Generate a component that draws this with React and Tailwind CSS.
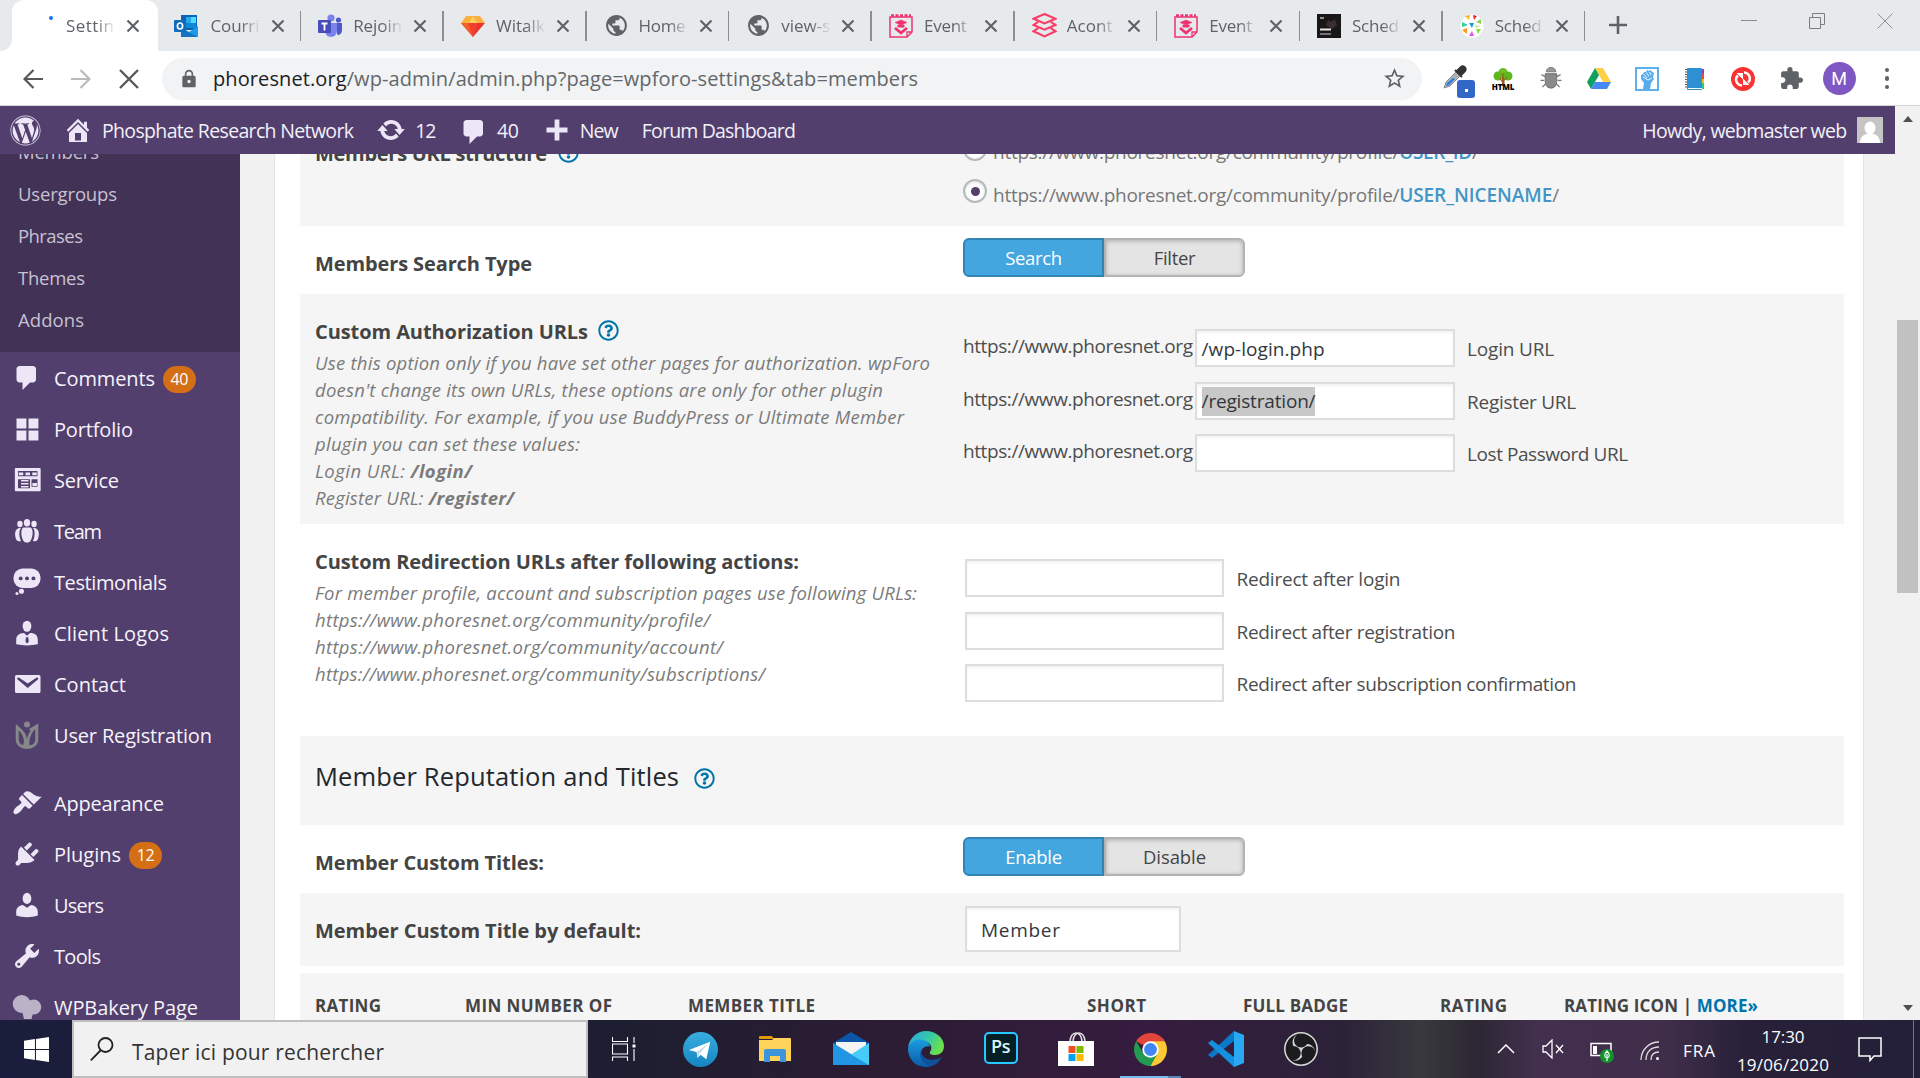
import React, { useLayoutEffect, useRef, useState } from "react";
import { FaRegQuestionCircle, FaWordpress, FaFistRaised } from "react-icons/fa";
import { MdPublic, MdExtension, MdStarBorder, MdLock } from "react-icons/md";
import { SiObsstudio } from "react-icons/si";

/* One line of text whose tracking is adjusted so that it is w pixels wide. */
function Fit({ w, children, className = "" }) {
  const ref = useRef(null);
  const [gap, setGap] = useState(0);
  useLayoutEffect(() => {
    const el = ref.current;
    const measure = () => {
      el.style.letterSpacing = "0px";
      const n = el.textContent.length;
      const g = (w - el.getBoundingClientRect().width) / Math.max(1, n - 1);
      el.style.letterSpacing = `${g}px`;
      setGap(g);
    };
    measure();
    document.fonts?.ready.then(measure);
  }, [w]);
  return (
    <span ref={ref} className={"inline-block whitespace-pre " + className} style={{ letterSpacing: `${gap}px` }}>
      {children}
    </span>
  );
}

/* ---------- browser tab icons ---------- */
const Outlook = () => (
  <svg viewBox="0 0 24 22" className="h-[22px] w-6">
    <rect x="7" y="0" width="16" height="15" fill="#0a64b5" />
    <rect x="12" y="2" width="5" height="6" fill="#28a8ea" /><rect x="17" y="2" width="5" height="6" fill="#50d9ff" />
    <rect x="12" y="8" width="10" height="5" fill="#0f88d8" />
    <path d="M7 13l8 4 9-6v10a1 1 0 0 1-1 1H7z" fill="#1d9be8" />
    <path d="M7 13l17 9H7z" fill="#1474c4" />
    <rect x="0" y="5" width="12" height="12" rx="1" fill="#0f6cbd" />
    <ellipse cx="6" cy="11" rx="2.6" ry="3" fill="none" stroke="#fff" strokeWidth="1.7" />
  </svg>
);
const Teams = () => (
  <svg viewBox="0 0 24 24" className="size-6">
    <circle cx="20.5" cy="6" r="2.6" fill="#5059c9" /><circle cx="13" cy="4" r="3.6" fill="#7b83eb" />
    <path d="M17 9h7v7c0 3-2 5-4.500 5z" fill="#5059c9" />
    <path d="M7 9h12v8a6 6 0 0 1-12 0z" fill="#7b83eb" />
    <rect x="0" y="6" width="13" height="13" rx="1" fill="#464eb8" />
    <path d="M3.500 9.500h6M6.500 9.500v7" stroke="#fff" strokeWidth="1.800" />
  </svg>
);
const Diamond = () => (
  <svg viewBox="0 0 24 22" className="h-[22px] w-6">
    <path d="M5 1h14l5 7H0z" fill="#fbb040" /><path d="M8 8l4-7 4 7z" fill="#fdd05a" />
    <path d="M0 8h24L12 22z" fill="#e8332e" /><path d="M7 8h10l-5 14z" fill="#f2402e" /><path d="M0 8h7l5 14z" fill="#f2602a" />
  </svg>
);
const Globe = () => <MdPublic className="size-[25px] text-[#5f6368]" />;
const Event = () => (
  <svg viewBox="0 0 24 24" className="size-6" fill="none" stroke="#f0326e">
    <path d="M1 3h22v15l-5 5H1z" strokeWidth="1.500" /><path d="M2 1.500h20" strokeWidth="2.500" strokeDasharray="3 1.500" />
    <path d="M18 23v-5h5" strokeWidth="1.300" />
    <path d="M12 6l6 2.500-6 2.500-6-2.500z" fill="#f0326e" strokeWidth=".5" /><path d="M9 11h6v2H9z" fill="#f0326e" />
    <path d="M6 14l6 5 6-5" strokeWidth="2.800" />
  </svg>
);
const Stack = () => (
  <svg viewBox="0 0 24 24" className="size-[25px]" fill="none" stroke="#fb3b64" strokeWidth="2">
    <path d="M12 1l10.500 4.500L12 10 1.500 5.500z" />
    <path d="M6 8.500l-4.500 3L12 16l10.500-4.500-4.500-3M6 14.500l-4.500 3L12 22.500l10.500-5-4.500-3" />
  </svg>
);
const Photo = () => (
  <svg viewBox="0 0 24 24" className="size-6">
    <rect width="24" height="24" fill="#191718" /><path d="M11 6l3 2 4-3 2 6-5 4-6-4z" fill="#3a3030" />
    <path d="M3 4h4" stroke="#d6d6d6" strokeWidth="1.300" /><path d="M3 15.500h11" stroke="#e6e6e6" strokeWidth="2" /><path d="M3 20h11" stroke="#a6a6a6" strokeWidth="1.300" />
  </svg>
);
const Confetti = () => (
  <svg viewBox="0 0 24 24" className="size-6">
    <circle cx="12" cy="12" r="11.500" fill="#fff" />
    <path d="M5 2l5-1-1 5z" fill="#f7b52a" /><path d="M13 1l4 1-3 4z" fill="#e3232f" /><path d="M16 8l5-3v5z" fill="#8ed04b" />
    <path d="M9 9h5l-2 5z" fill="#1e9be0" /><path d="M2 8l6 3-6 2z" fill="#2fd49a" /><path d="M7 14v6l-5-4z" fill="#f79a1e" />
    <path d="M9 22l3-5 2 5z" fill="#f04ff0" /><path d="M16 15h5l-3 5z" fill="#8ae03a" /><path d="M15 11l6 1-5 2z" fill="#c8e8a0" />
  </svg>
);
const Cross = () => (
  <svg viewBox="0 0 14 14" className="size-3.5" stroke="#5f6368" strokeWidth="2.200"><path d="M1.500 1.500l11 11M12.500 1.500l-11 11" /></svg>
);

const TABS = [
  ["Courri", Outlook, 49], ["Rejoin", Teams, 49], ["Witalk", Diamond, 49], ["Home", Globe, 47], ["view-s", Globe, 49],
  ["Event", Event, 43], ["Acont", Stack, 46], ["Event", Event, 43], ["Sched", Photo, 47], ["Sched", Confetti, 47],
];

function TabText({ w, children }) {
  return (
    <div className="w-[50px] overflow-hidden [mask-image:linear-gradient(to_right,black_60%,transparent_100%)]">
      <Fit w={w}>{children}</Fit>
    </div>
  );
}

function TabStrip() {
  return (
    <div className="flex h-[51px] bg-[#e6eaed] text-[17px] text-[#5f6368]">
      <div className="flex w-[12px] items-end bg-white"><div className="h-full w-full rounded-br-xl bg-[#e6eaed]" /></div>
      <div className="flex w-[145.500px] shrink-0 items-center rounded-t-xl bg-white pl-[37px]">
        <span className="mb-4 size-[4px] rounded-full bg-[#1a73e8]" />
        <div className="ml-[13px] w-[50px]"><TabText w={48}>Settin</TabText></div>
        <span className="ml-[10px]"><Cross /></span>
      </div>
      <div className="w-[1px] bg-white"><div className="h-full rounded-bl-xl bg-[#e6eaed]" /></div>
      {TABS.map(([label, Icon, w], i) => (
        <div key={i} className="flex w-[142.700px] shrink-0 items-center">
          <div className={i ? "ml-[17px] w-[25px]" : "ml-[15px] w-[25px]"}><Icon /></div>
          <div className={i ? "ml-[10px] w-[50px]" : "ml-[12px] w-[50px]"}><TabText w={w}>{label}</TabText></div>
          <span className="ml-[10px]"><Cross /></span>
          <span className="ml-auto h-[30px] w-[1.500px] bg-[#8b8f93]" />
        </div>
      ))}
      <svg viewBox="0 0 18 18" className="mt-4 ml-[24px] size-[18px]" stroke="#5f6368" strokeWidth="2.600"><path d="M9 0v18M0 9h18" /></svg>
      <div className="ml-auto flex items-start gap-[52px] pt-[13px] pr-[27px]">
        <svg viewBox="0 0 16 16" className="size-4" stroke="#8b8e91"><path d="M0 7.500h16" /></svg>
        <svg viewBox="0 0 16 16" className="size-4" stroke="#7b7e81" fill="none"><path d="M.5 4.500h11v11H.5zM3.500 4V.5h12v11H12" /></svg>
        <svg viewBox="0 0 16 16" className="size-4" stroke="#8b8e91"><path d="M.5 .5l15 15M15.500 .5l-15 15" /></svg>
      </div>
    </div>
  );
}

/* ---------- toolbar ---------- */
const Dropper = () => (
  <div className="relative h-8 w-8">
    <svg viewBox="0 0 24 24" className="mt-0.5 size-6">
      <path d="M1 23l2-6L14 6l4 4L7 21z" fill="#aeb3b8" stroke="#667" strokeWidth=".7" /><path d="M3 21l1-3 6-5 2 1-6 6z" fill="#2c7be0" />
      <path d="M12 5l7 7M14 6l4-4c2-2 6 1 4 4l-4 4z" fill="#333" stroke="#333" strokeWidth="2" />
    </svg>
    <span className="absolute top-[17px] left-[14px] flex size-[18px] items-center justify-center rounded-[3px] bg-[#3267c8]"><i className="mt-1 size-[3px] bg-white" /></span>
  </div>
);
const Tree = () => (
  <div className="flex w-6 flex-col items-center">
    <svg viewBox="0 0 20 18" className="h-[18px] w-5">
      <path d="M9 18V8h2.500v10z" fill="#9a5a1b" /><circle cx="10" cy="4.500" r="4.500" fill="#6cc024" /><circle cx="5" cy="8" r="4.500" fill="#5fb51d" /><circle cx="15" cy="8" r="4.500" fill="#5fb51d" />
      <path d="M10 15l-3-5M10.500 13l3-4M10 14V5" stroke="#a3591c" strokeWidth="1.200" />
    </svg>
    <span className="-mt-1 h-2 text-[8px] leading-[9px] font-black tracking-[-.2px] text-black">HTML</span>
  </div>
);
const Bug = () => (
  <svg viewBox="0 0 22 24" className="h-[23px] w-[22px]">
    <path d="M1 8l4 2M0 14h4M2 21l3-3M21 8l-4 2M22 14h-4M20 21l-3-3" stroke="#777" strokeWidth="1.300" />
    <path d="M6 5a5 4.500 0 0 1 10 0z" fill="#999" stroke="#777" /><path d="M5 7h12v8c0 5-3 7-6 7s-6-2-6-7z" fill="#8a8a8a" stroke="#6d6d6d" />
  </svg>
);
const Drive = () => (
  <svg viewBox="0 0 24 22" className="h-[22px] w-6">
    <path d="M8 0h8l8 14h-8z" fill="#ffcf48" /><path d="M8 0l4 7L4 21l-4-7z" fill="#11a05f" /><path d="M4 21l4-7h16l-4 7z" fill="#4688f4" />
  </svg>
);
const Book = () => (
  <svg viewBox="0 0 20 24" className="h-6 w-5">
    <path d="M16 2h3v5h-3z" fill="#8e44ad" /><path d="M16 7h3v5h-3z" fill="#e74c3c" /><path d="M16 12h3v5h-3z" fill="#f1c40f" /><path d="M16 16h3v6h-3z" fill="#2ecc71" />
    <rect x="2" y="1" width="15" height="22" rx="1" fill="#2f8fd3" /><path d="M3 21.500h14" stroke="#fff" /><path d="M1 2v20" stroke="#555" strokeWidth="2" strokeDasharray="1 1.500" />
  </svg>
);
const RedSync = () => (
  <svg viewBox="0 0 24 24" className="size-6">
    <circle cx="12" cy="12" r="12" fill="#fb3232" />
    <path d="M11 18.500C5 18 3.500 11.500 7 8.500M13 5.500c6 .5 7.500 7 4 10" fill="none" stroke="#fff" strokeWidth="2.500" />
    <path d="M5.500 6h6.500v6.500zM18.500 18H12v-6.500z" fill="#fff" />
  </svg>
);

function Toolbar() {
  return (
    <div className="flex h-[55px] items-center border-b border-[#d6d2da] bg-white pt-px">
      <div className="flex w-[162px] items-center gap-[28px] pl-[23px]">
        <svg viewBox="0 0 20 20" className="size-5 shrink-0" fill="none" stroke="#55585c" strokeWidth="2.200"><path d="M20 10H2M10.500 1L1.500 10l9 9" /></svg>
        <svg viewBox="0 0 20 20" className="size-5 shrink-0" fill="none" stroke="#b9bbbe" strokeWidth="2.200"><path d="M0 10h18M9.500 1l9 9-9 9" /></svg>
        <svg viewBox="0 0 20 20" className="size-5 shrink-0" stroke="#55585c" strokeWidth="2.400"><path d="M1 1l18 18M19 1L1 19" /></svg>
      </div>
      <div className="flex h-[42px] w-[1260px] items-center rounded-full bg-[#f1f3f4] pr-[15px] pl-[17px] text-[20px] text-[#63676b]">
        <MdLock className="size-5 text-[#5f6368]" />
        <Fit w={705} className="ml-[14px]"><span className="text-[#202124]">phoresnet.org</span>/wp-admin/admin.php?page=wpforo-settings&amp;tab=members</Fit>
        <MdStarBorder className="ml-auto size-[25px] text-[#5f6368]" />
      </div>
      <div className="flex w-[498px] items-center pl-[9px]">
        <div className="flex w-12 justify-center pl-2"><Dropper /></div>
        <div className="flex w-12 justify-center"><Tree /></div>
        <div className="flex w-12 justify-center"><Bug /></div>
        <div className="flex w-12 justify-center"><Drive /></div>
        <div className="flex w-12 justify-center"><span className="flex size-6 items-center justify-center border-2 border-[#5cb0ee] bg-white">
          <svg viewBox="0 0 20 20" className="size-5" fill="#56aced"><path d="M6 20l1-6-3-4V6l2-1 1-2 2 0 1-2 2 1 2-1 1 2 2 1-1 4 1 2-3 4-1 6z" /><path d="M7 5l3 4M9.500 3.500l2.500 4M12.500 3l1.500 3M6 8l5 3 4-2" stroke="#fff" strokeWidth=".9" fill="none" /></svg>
        </span></div>
        <div className="flex w-12 justify-center"><Book /></div>
        <div className="flex w-12 justify-center"><RedSync /></div>
        <div className="flex w-12 justify-center"><MdExtension className="size-[25px] text-[#5f6368]" /></div>
        <div className="flex w-12 justify-center"><span className="flex size-[33px] items-center justify-center rounded-full bg-[#7e57c2] font-[Roboto] text-[18px] text-white">M</span></div>
        <div className="flex w-12 flex-col items-center gap-1">
          <i className="size-[4.500px] rounded-full bg-[#5f6368]" /><i className="size-[4.500px] rounded-full bg-[#5f6368]" /><i className="size-[4.500px] rounded-full bg-[#5f6368]" />
        </div>
      </div>
    </div>
  );
}

/* ---------- admin icons on a 20-unit grid ---------- */
const P = ({ d, className = "size-[30px]", children }) => (
  <svg viewBox="0 0 20 20" className={className + " shrink-0"} fill="#ece6f6">{d && <path fillRule="evenodd" d={d} />}{children}</svg>
);
const COMMENT = "M5 2h9c1.100 0 2 .9 2 2v7c0 1.100-.9 2-2 2h-2l-5 5v-5H5c-1.100 0-2-.9-2-2V4c0-1.100.9-2 2-2z";
const HOME = "M16 8.500l1.530 1.530-1.060 1.060L10 4.600l-6.470 6.490-1.060-1.060L10 2.500l4 4v-2h2v4zm-6-2.460l6 5.990V18H4v-5.970zM12 17v-5H8v5h4z";
const UPDATE = "M10.200 3.280c3.530 0 6.430 2.610 6.920 6h2.080l-3.500 4-3.500-4h2.320c-.45-1.970-2.210-3.450-4.320-3.450-1.450 0-2.730.71-3.540 1.780L4.950 5.660C6.230 4.200 8.110 3.280 10.200 3.280zm-.4 13.440c-3.520 0-6.430-2.610-6.920-6H.8l3.500-4c1.170 1.330 2.330 2.670 3.500 4H5.480c.45 1.970 2.210 3.450 4.320 3.450 1.450 0 2.730-.71 3.540-1.780l1.710 1.950c-1.280 1.460-3.150 2.380-5.250 2.380z";
const BRUSH = "M14.480 11.060L7.410 3.990l1.500-1.500c.5-.56 2.300-.47 3.510.32 1.210.8 1.430 1.280 2.910 2.100 1.180.64 2.450 1.260 4.450.85zm-.71.71L6.700 4.700 4.930 6.470c-.39.39-.39 1.020 0 1.410l1.060 1.060c.39.39.39 1.030 0 1.420-.6.6-1.430 1.110-2.210 1.690-.35.26-.7.53-1.010.84C1.430 14.230.4 16.080 1.400 17.070c.99 1 2.840-.03 4.180-1.360.31-.31.58-.66.85-1.020.57-.78 1.080-1.610 1.690-2.210.39-.39 1.020-.39 1.410 0l1.060 1.060c.39.39 1.020.39 1.410 0z";
const PLUG = "M13.110 4.360L9.870 7.600 8 5.730l3.240-3.240c.35-.34 1.050-.2 1.560.32.52.51.66 1.210.31 1.550zm-8 1.770l.91-1.120 9.010 9.010-1.190.84c-.71.71-2.630 1.160-3.820 1.160H6.140L4.900 17.260c-.59.59-1.540.59-2.120 0-.59-.58-.59-1.530 0-2.120l1.240-1.240v-3.880c0-1.130.4-3.190 1.090-3.890zm7.260 3.970l3.240-3.240c.34-.35 1.040-.21 1.550.31.52.51.66 1.210.31 1.550l-3.240 3.250z";
const USER = "M10 9.250c-2.270 0-2.730-3.440-2.730-3.440C7 4.020 7.820 2 9.970 2c2.160 0 2.980 2.020 2.710 3.810 0 0-.41 3.440-2.680 3.440zm0 2.570L12.720 10c2.390 0 4.520 2.330 4.520 4.530v2.490s-3.650 1.130-7.240 1.130c-3.650 0-7.240-1.130-7.240-1.130v-2.490c0-2.250 1.940-4.480 4.470-4.480z";
const WRENCH = "M16.680 9.770c-1.340 1.340-3.300 1.670-4.950.99l-5.410 6.520c-.99.99-2.590.99-3.580 0s-.99-2.590 0-3.570l6.520-5.420c-.68-1.650-.35-3.610.99-4.950 1.280-1.280 3.120-1.620 4.720-1.060l-2.890 2.890 2.820 2.820 2.860-2.870c.53 1.580.18 3.390-1.080 4.650zM3.810 16.210c.4.39 1.040.39 1.430 0 .4-.4.4-1.040 0-1.430-.39-.4-1.030-.4-1.430 0-.39.39-.39 1.030 0 1.430z";
const MAIL = "M3 4h15a1 1 0 0 1 1 1v10a1 1 0 0 1-1 1H3a1 1 0 0 1-1-1V5a1 1 0 0 1 1-1zm7.490 8.600l6.740-5.530c.24-.2.43-.66.13-1.070-.29-.41-.82-.42-1.170-.17l-5.700 3.860L4.800 5.830c-.35-.25-.88-.24-1.170.17-.3.41-.11.87.13 1.070z";

const Grid = () => <P d="M3 3h6.600v6.600H3zM11 3h6.600v6.600H11zM3 11h6.600v6.600H3zM11 11h6.600v6.600H11z" />;
const Service = () => (
  <P d="M2.500 2h16a.6.6 0 0 1 .6.600v14.300a.6.6 0 0 1-.6.600h-16a.6.6 0 0 1-.6-.6V2.600a.6.600 0 0 1 .6-.6z">
    <path d="M4 4h13v3.500H4zM4 9.500h8v6H4zM13 9.500h4v5h-4z" fill="#523f6d" /><path d="M4.500 5h3v1.800h-3zM9 5h3v1.800H9zM13.500 5h3v1.800h-3zM6 10h5v1H6zM6 12h5v1H6zM6 14h5v1H6zM13.600 12h3v2h-3z" />
  </P>
);
const Team = () => (
  <P>
    <ellipse cx="5.300" cy="5.300" rx="1.800" ry="2.200" /><ellipse cx="14.700" cy="5.300" rx="1.800" ry="2.200" /><ellipse cx="10" cy="4.500" rx="2.100" ry="2.500" />
    <path d="M5.500 8c-4 0-4 5-2.500 8 .8.9 1.800 1 3 .6C4.500 13.500 4.600 9.500 6 8zM14.500 8c4 0 4 5 2.500 8-.8.9-1.800 1-3 .6 1.500-3.100 1.400-7.100 0-8.600zM7.500 7.700h5c2 1.300 1.500 7-.5 9.300-.8.900-3.200.9-4 0-2-2.300-2.500-8-.5-9.300z" />
  </P>
);
const Bubble = () => (
  <P>
    <rect x="1" y="1" width="18" height="13" rx="6" /><circle cx="6.300" cy="16.200" r="1.700" /><circle cx="3.300" cy="17.700" r="1" />
    <g fill="#523f6d"><circle cx="5.800" cy="7.600" r="1.300" /><circle cx="10" cy="7.600" r="1.300" /><circle cx="14.300" cy="7.600" r="1.300" /></g>
  </P>
);
const Business = () => (
  <P>
    <ellipse cx="10" cy="5.500" rx="2.900" ry="3.700" /><path d="M8 10l2 1.800 2-1.800c3.500 0 5.200 1.800 5.200 4.500V17.500c-4.500 1-9.800 1-14.400 0v-3C2.800 12 4.500 10 8 10z" /><path d="M9.300 12.800h1.500l.4 3-1.200 1.200-1-1.200z" fill="#523f6d" />
  </P>
);
const UserIcon = () => (
  <P><ellipse cx="10" cy="5.600" rx="2.900" ry="3.700" /><path d="M7.300 10L10 11.800 12.700 10c2.900.2 4.500 2.300 4.500 4.500V17c-4.500 1.500-9.900 1.500-14.400 0v-2.500c0-2.200 1.600-4.300 4.500-4.500z" /></P>
);
const Registration = () => (
  <P>
    <path d="M2.500 2.500l3.200 3C8.800 8.300 10 11 10 13c.3-2 1-3.800 2.300-5.600l-.9-1.400L17.500 2.300V13c0 3.800-3 6.200-7.500 6.200S2.500 16.800 2.500 13zM4.500 7v6c0 1.800 1 3.200 2.700 3.800C9.300 14 6.800 9 4.500 7zM15.500 6c-3 3-4.300 7-3.800 10.900 2.500-.3 3.800-1.900 3.800-3.900z" fill="#85878a" fillRule="evenodd" />
    <circle cx="10" cy="3" r="2" fill="#85878a" />
  </P>
);
const Bakery = () => <P><g fill="#bbb2c7"><circle cx="6.500" cy="8" r="6" /><circle cx="14.500" cy="10" r="5" /><path d="M6 10h9l-2 8H8z" /></g></P>;
const Icon = (d) => () => <P d={d} />;

const MENU = [
  ["Comments", Icon(COMMENT), 101, "40"], ["Portfolio", Grid, 79], ["Service", Service, 65], ["Team", Team, 48], ["Testimonials", Bubble, 113],
  ["Client Logos", Business, 115], ["Contact", Icon(MAIL), 72], ["User Registration", Registration, 158], null,
  ["Appearance", Icon(BRUSH), 110], ["Plugins", Icon(PLUG), 67, "12"], ["Users", UserIcon, 50], ["Tools", Icon(WRENCH), 47], ["WPBakery Page", Bakery, 144],
];

function AdminBar() {
  return (
    <div className="flex h-12 w-[1895px] items-center bg-[#523f6d] pl-[10px] text-[19.500px] text-[#f3f0f8]">
      <FaWordpress className="size-[31px] text-[#ece6f6]" />
      <P d={HOME} className="ml-[22px] size-[30px]" />
      <Fit w={252} className="mt-0.5 ml-[9px]">Phosphate Research Network</Fit>
      <P d={UPDATE} className="ml-[23px] size-[30px]" />
      <Fit w={21} className="mt-0.5 ml-[9px]">12</Fit>
      <P d={COMMENT} className="mt-1 ml-[24px] size-[30px]" />
      <Fit w={22} className="mt-0.5 ml-2">40</Fit>
      <P d="M8.400 3h3.200v5.400H17v3.200h-5.400V17H8.400v-5.400H3V8.400h5.400z" className="ml-[23px] size-[30px]" />
      <Fit w={39} className="mt-0.5 ml-[8px]">New</Fit>
      <Fit w={154} className="mt-0.5 ml-[24px]">Forum Dashboard</Fit>
      <Fit w={205} className="mt-0.5 ml-auto">Howdy, webmaster web</Fit>
      <svg viewBox="0 0 26 26" className="mr-[12px] ml-[10.500px] size-[26px] shrink-0 bg-[#c5c5c5]"><ellipse cx="13" cy="11" rx="5.500" ry="6.500" fill="#fff" /><path d="M3 26c0-7 5-9 7-9h6c2 0 7 2 7 9z" fill="#fff" /></svg>
    </div>
  );
}

function Sidebar() {
  return (
    <div className="h-full w-[240px] shrink-0 overflow-hidden bg-[#523f6d]">
      <div className="flex h-[198px] flex-col bg-[#413256] pl-[18px] text-[18.500px] leading-[42px] text-[#c8c1d2]">
        {[["Members", 81], ["Usergroups", 99], ["Phrases", 65], ["Themes", 67], ["Addons", 66]].map(([t, w], i) => (
          <div key={t} className={i ? "h-[42px]" : "-mt-[23px] h-[42px]"}><Fit w={w}>{t}</Fit></div>
        ))}
      </div>
      <div className="h-[2px]" />
      {MENU.map((m, i) => {
        if (!m) return <div key={i} className="h-[17px]" />;
        const [t, I, w, badge] = m;
        return (
          <div key={i} className="flex h-[51px] items-center pb-1 pl-[12px] text-[20px] text-[#f6f3fa]">
            <I />
            <Fit w={w} className="mt-0.5 ml-3">{t}</Fit>
            {badge && <span className="mt-[3px] ml-[8px] flex h-[27px] w-[33px] items-center justify-center rounded-full bg-[#d46f15] text-[16px] tracking-[-.3px] text-white">{badge}</span>}
          </div>
        );
      })}
    </div>
  );
}

/* ---------- settings table ---------- */
const Help = ({ className }) => <FaRegQuestionCircle className={"size-[21px] text-[#0073aa] " + className} />;
const Title = ({ w, children }) => <Fit w={w} className="text-[20px] font-bold text-[#444]">{children}</Fit>;
const Field = ({ className, children }) => (
  <div className={"flex h-[38px] items-center border-2 border-[#ddd] bg-white pl-1 text-[19px] text-[#32373c] shadow-[inset_0_2px_3px_rgba(0,0,0,.05)] " + className}>{children}</div>
);
function Row({ className, left, children }) {
  return (
    <div className={"flex shrink-0 " + className}>
      <div className="w-[648px] shrink-0 pl-[15px]">{left}</div>
      <div className="flex-1 pl-[15px]">{children}</div>
    </div>
  );
}
function Switch({ a, b, aw, bw }) {
  return (
    <div className="mt-3 flex h-[39px] w-[282px] text-[18.500px]">
      <div className="flex w-[141px] items-center justify-center rounded-l-md border-2 border-[#3383b5] bg-[#43a6df] text-white"><Fit w={aw}>{a}</Fit></div>
      <div className="flex w-[141px] items-center justify-center rounded-r-md border-2 border-[#b3b3b3] bg-[#e4e4e4] text-[#444] shadow-[inset_0_1px_4px_rgba(0,0,0,.25)]"><Fit w={bw}>{b}</Fit></div>
    </div>
  );
}
const Radio = ({ on }) => (
  <span className="mt-[7px] flex size-[24px] shrink-0 items-center justify-center rounded-full border-2 border-[#b4b9be] bg-white shadow-[inset_0_1px_3px_rgba(0,0,0,.15)]">{on && <i className="size-[9px] rounded-full bg-[#523f6d]" />}</span>
);
const ProfileUrl = ({ name, w, className }) => (
  <div className={"ml-1.5 flex text-[19px] text-[#777] " + className}>
    <Fit w={406.500}>https://www.phoresnet.org/community/profile/</Fit>
    <Fit w={w} className="font-semibold text-[#4295c6]">{name}</Fit>
    <span>/</span>
  </div>
);

const Desc = ({ lines }) => (
  <div className="text-[18.500px] leading-[27px] text-[#7b7b7b] italic">
    {lines.map(([w, t, b]) => <div key={t + (b || "")} className="h-[27px]"><Fit w={w}>{t}{b && <b className="font-bold">{b}</b>}</Fit></div>)}
  </div>
);

const HEADS = [["RATING", 66, "w-[150px]"], ["MIN NUMBER OF", 147, "w-[223px]"], ["MEMBER TITLE", 127, "w-[399px]"], ["SHORT", 59, "w-[156px]"], ["FULL BADGE", 105, "w-[197px]"], ["RATING", 67, "w-[124px]"]];

function Settings() {
  return (
    <div className="flex h-full flex-1 overflow-hidden bg-[#f1f1f1] pl-[34px]">
      <div className="flex h-full w-[1590px] flex-col border-x border-[#e5e5e5] bg-white pr-[19px] pl-[25px]">
        <Row className="h-[72px] bg-[#f5f5f5]" left={
          <div className="-mt-[15px] flex items-center"><Title w={232}>Members URL structure</Title><Help className="mb-1 ml-[11px]" /></div>}>
          <div className="-mt-[24px] flex h-[42px]"><Radio /><ProfileUrl name="USER_ID" w={73} className="leading-[44px]" /></div>
          <div className="flex h-[42px]"><Radio on /><ProfileUrl name="USER_NICENAME" w={153} className="leading-[46px]" /></div>
        </Row>
        <Row className="h-[68px]" left={<div className="pt-[23px]"><Title w={217}>Members Search Type</Title></div>}>
          <Switch a="Search" b="Filter" aw={57} bw={42} />
        </Row>
        <Row className="h-[230px] bg-[#f5f5f5]" left={
          <div className="pt-[21px]">
            <div className="flex h-[34px] items-center"><Title w={273}>Custom Authorization URLs</Title><Help className="mb-1 ml-[10px]" /></div>
            <Desc lines={[
              [615, "Use this option only if you have set other pages for authorization. wpForo"],
              [568, "doesn't change its own URLs, these options are only for other plugin"],
              [589, "compatibility. For example, if you use BuddyPress or Ultimate Member"],
              [265, "plugin you can set these values:"],
              [157, "Login URL: ", "/login/"],
              [199, "Register URL: ", "/register/"],
            ]} />
          </div>}>
          <div className="flex flex-col gap-[14.600px] pt-[35px] text-[19px] text-[#4d4d4d]">
            {[["/wp-login.php", 123, "Login URL", 87], ["/registration/", 114, "Register URL", 109], ["", 0, "Lost Password URL", 161]].map(([v, vw, t, tw], i) => (
              <div key={t} className="flex h-[38px] items-center">
                <Fit w={230} className={i === 1 ? "mb-[3px]" : "mb-1"}>https://www.phoresnet.org</Fit>
                <Field className="ml-[2px] w-[260px]">{v && <Fit w={vw} className={i ? "ml-px bg-[#c8c8c8] mt-0.5" : "ml-px mt-0.5"}>{v}</Fit>}</Field>
                <Fit w={tw} className={i === 1 ? "mt-[3px] ml-[12.500px]" : "mt-0.5 ml-[12.500px]"}>{t}</Fit>
              </div>
            ))}
          </div>
        </Row>
        <Row className="h-[212px]" left={
          <div className="pt-[21px]">
            <div className="flex h-[34px] items-center"><Title w={484}>Custom Redirection URLs after following actions:</Title></div>
            <Desc lines={[
              [602, "For member profile, account and subscription pages use following URLs:"],
              [395, "https://www.phoresnet.org/community/profile/"],
              [408, "https://www.phoresnet.org/community/account/"],
              [450, "https://www.phoresnet.org/community/subscriptions/"],
            ]} />
          </div>}>
          <div className="flex flex-col gap-[14.600px] pt-[35px] pl-[2px] text-[19px] text-[#4d4d4d]">
            {[["Redirect after login", 164], ["Redirect after registration", 219], ["Redirect after subscription confirmation", 340]].map(([t, w], i) => (
              <div key={t} className="flex h-[38px] items-center"><Field className="w-[259px]" /><Fit w={w} className={i === 1 ? "mt-[3px] ml-[12.500px]" : "mt-0.5 ml-[12.500px]"}>{t}</Fit></div>
            ))}
          </div>
        </Row>
        <div className="flex h-[89px] shrink-0 items-center bg-[#f5f5f5] pb-2 pl-[15px]">
          <Fit w={364} className="text-[25.500px] text-[#23282d]">Member Reputation and Titles</Fit><Help className="mt-[3px] ml-[15px]" />
        </div>
        <Row className="h-[68px]" left={<div className="pt-[23px]"><Title w={229}>Member Custom Titles:</Title></div>}>
          <Switch a="Enable" b="Disable" aw={57} bw={63} />
        </Row>
        <Row className="h-[73px] bg-[#f5f5f5]" left={<div className="pt-[23px]"><Title w={326}>Member Custom Title by default:</Title></div>}>
          <Field className="mt-[13px] ml-[2px] h-[46px]! w-[216px] pl-[14px]!"><Fit w={79} className="mt-0.5">Member</Fit></Field>
        </Row>
        <div className="mt-[7px] flex h-[60px] shrink-0 items-start bg-[#f5f5f5] pt-[21px] pl-[15px] text-[17px] leading-6 font-bold text-[#444]">
          {HEADS.map(([t, w, c], i) => <div key={i} className={c + " shrink-0"}><Fit w={w}>{t}</Fit></div>)}
          <Fit w={194}>RATING ICON | <span className="text-[#0073aa]">MORE»</span></Fit>
        </div>
      </div>
    </div>
  );
}

function Scrollbar() {
  return (
    <div className="flex w-[25px] shrink-0 flex-col items-center bg-[#f1f1f1]">
      <i className="mt-[10px] border-x-[5.500px] border-b-[6px] border-x-transparent border-b-[#505050]" />
      <div className="mt-[198px] h-[273px] w-[21px] bg-[#c1c1c1]" />
      <i className="mt-auto mb-[9px] border-x-[5.500px] border-t-[6px] border-x-transparent border-t-[#505050]" />
    </div>
  );
}

/* ---------- taskbar ---------- */
const TaskView = () => <svg viewBox="0 0 24 24" className="mr-1 size-6" fill="none" stroke="#fff" strokeWidth="1.100"><path d="M.5 0v4.500h15V0M.5 7h15v10H.5zM.5 24v-4h15v4M22 0v6M22 12v12" /><path d="M20.500 7.500h3v3h-3z" fill="#fff" stroke="none" /></svg>;
const Telegram = () => <svg viewBox="0 0 36 36" className="size-[35px]"><defs><linearGradient id="tg" x2="0" y2="1"><stop stopColor="#37aee2" /><stop offset="1" stopColor="#1585c0" /></linearGradient></defs><circle cx="18" cy="18" r="18" fill="url(#tg)" /><path d="M6 18.500L28 10l-4 18-6-4.500-3 3-1-6z" fill="#fff" /><path d="M14 20.500L26 12l-9 10-2 4.500z" fill="#c4dcec" /></svg>;
const Folder = () => <svg viewBox="0 0 33 28" className="h-7 w-[33px]"><path d="M0 2a1 1 0 0 1 1-1h12l2 3H0z" fill="#e09a06" /><path d="M0 5h13l2-2h16a1 1 0 0 1 1 1v22H0z" fill="#ffd359" /><path d="M5 27V16a2 2 0 0 1 2-2h18a2 2 0 0 1 2 2v11h-6v-6H11v6z" fill="#3d95dc" /></svg>;
const Mail = () => <svg viewBox="0 0 36 34" className="h-[34px] w-9"><path d="M0 11L18 0l18 11v6H0z" fill="#0b56a8" /><path d="M3 10h30v8L18 26 3 18z" fill="#f4f4f4" /><path d="M36 11v22H14z" fill="#2bb4ee" /><path d="M0 11l36 22H0z" fill="#2196e3" /><path d="M36 11L18 22.500l18 10.500z" fill="#45cdf8" /></svg>;
const Edge = () => (
  <svg viewBox="0 0 36 36" className="size-9">
    <defs><linearGradient id="e1" x2="1" y2=".4"><stop stopColor="#2aa5e0" /><stop offset=".6" stopColor="#35c9a8" /><stop offset="1" stopColor="#6be04c" /></linearGradient><linearGradient id="e2" x2="0" y2="1"><stop stopColor="#1b9de2" /><stop offset="1" stopColor="#0c59a4" /></linearGradient></defs>
    <path d="M0 17C1 7 9 0 18 0c10 0 18 7 18 15 0 6-4 9-9 9-4 0-6-1-5-3 3-4 1-9-5-11C9 8 2 12 0 17z" fill="url(#e1)" />
    <path d="M0 18C1 11 7 8.500 12 8.500c6 0 10 4 10 7-5-1-9 2-9 7 0 6 5 10 10 13-13 3-23-6-23-17.500z" fill="url(#e2)" />
    <path d="M13 20c-3 7 4 15 11 15 4-1 8-5 10-9-8 5-20 3-21-6z" fill="#10509a" />
  </svg>
);
const Ps = () => <span className="mb-0.5 flex h-[32px] w-[34px] items-center justify-center rounded-[5px] border-2 border-[#26c9ff] bg-[#061e26] pb-[3px] text-[18px] font-semibold tracking-[-.5px] text-[#d9f5ff]">Ps</span>;
const Store = () => <svg viewBox="0 0 36 34" className="h-[34px] w-9"><path d="M12 10c0-12 12-12 12 0M15 10c0-12 12-12 12 0" fill="none" stroke="#ddd" strokeWidth="1.500" /><rect x="0" y="9" width="36" height="25" fill="#fff" /><path d="M10.500 14h7v7h-7z" fill="#f25022" /><path d="M18.500 14h7v7h-7z" fill="#7fba00" /><path d="M10.500 22h7v7h-7z" fill="#00a4ef" /><path d="M18.500 22h7v7h-7z" fill="#ffb900" /></svg>;
const Chrome = () => <svg viewBox="0 0 34 34" className="size-[33px]"><path d="M17 17L2.300 8.500A17 17 0 0 1 31.700 8.500z" fill="#e2463a" /><path d="M17 8.500h14.700A17 17 0 0 1 17 34l7.400-13z" fill="#fcc934" /><path d="M17 34A17 17 0 0 1 2.300 8.500L9.600 21l7.400 4z" fill="#229a51" /><path d="M9.600 21L17 34l7.400-13z" fill="#229a51" /><path d="M17 34l7.400-13L28 22z" fill="#fcc934" /><circle cx="17" cy="17" r="8.500" fill="#fff" /><circle cx="17" cy="17" r="6.600" fill="#4285f4" /></svg>;
const Code = () => <svg viewBox="0 0 36 36" className="size-9"><path d="M26 0l10 4v28l-10 4z" fill="#2aa9f2" /><path d="M26 0v10L4 27 0 24z" fill="#0a79c9" /><path d="M26 36V26L4 9 0 12z" fill="#1590de" /></svg>;
const Obs = () => <span className="flex size-[34px] items-center justify-center rounded-full bg-[#1c1b1e] text-[#d8d8d8]"><SiObsstudio className="size-[34px]" /></span>;

function Taskbar() {
  const apps = [TaskView, Telegram, Folder, Mail, Edge, Ps, Store, Chrome, Code, Obs];
  return (
    <div className="flex h-[58px] items-stretch bg-[linear-gradient(90deg,#1a1e3c_0%,#1d1e31_32%,#2b1c33_45%,#361c3f_60%,#2b2238_70%,#39393d_74%,#2c2733_77%,#43304f_80%,#3f2d4a_87%,#272038_91%,#241f39_100%)] text-white">
      <div className="flex w-[72px] items-center justify-center"><svg viewBox="0 0 24 24" className="size-[25px]" fill="#fff"><path d="M0 3.500l10.500-1.500v9.500H0zM11.500 1.900L24 0v11.500H11.500zM0 12.500h10.500V22L0 20.500zM11.500 12.500H24V24l-12.500-1.900z" /></svg></div>
      <div className="flex w-[516px] items-center border-2 border-[#bfbfbf] bg-[#f1f1f1] pl-[16px] text-[21px] text-[#333]">
        <svg viewBox="0 0 24 24" className="size-6" fill="none" stroke="#222" strokeWidth="1.800"><circle cx="15.500" cy="8" r="7" /><path d="M10.500 13.500L.8 23.300" /></svg>
        <Fit w={252} className="mt-[7px] ml-[18px]">Taper ici pour rechercher</Fit>
      </div>
      {apps.map((A, i) => (
        <div key={i} className={"flex w-[75px] shrink-0 items-center justify-center " + (A === Chrome ? "bg-[linear-gradient(90deg,#76b9ed_78%,#5587b4_78%)] bg-[length:61px_2px] bg-bottom bg-no-repeat" : "")}><A /></div>
      ))}
      <div className="ml-auto flex items-center text-[17px]">
        <svg viewBox="0 0 18 10" className="h-[10px] w-[18px]" fill="none" stroke="#fff" strokeWidth="1.500"><path d="M1 9l8-8 8 8" /></svg>
        <svg viewBox="0 0 22 20" className="ml-[27px] h-5 w-[22px]" fill="none" stroke="#fff" strokeWidth="1.300"><path d="M1 7h3l6-6v18l-6-6H1zM14 6l7 8M21 6l-7 8" /></svg>
        <svg viewBox="0 0 24 22" className="mt-2 ml-[26px] h-[22px] w-6" fill="none" stroke="#fff" strokeWidth="1.500"><path d="M1 1.500h20v12H1z" /><path d="M3 4h4v8H3z" fill="#fff" stroke="none" /><circle cx="17" cy="14" r="7" fill="#10932a" stroke="none" /><path d="M17 9c-4 4-2 7 0 7s4-3 0-7zM17 12v7" strokeWidth="1.200" /></svg>
        <svg viewBox="0 0 20 20" className="mt-1 ml-[26px] size-5" fill="none" stroke="#ddd" strokeWidth="1.300"><path d="M1 19C1 9 9 1 19 1M6 19C6 11 11 6 19 6M11 19c0-5 3-8 8-8" /><circle cx="17.500" cy="17.500" r="1.500" fill="#fff" stroke="none" /></svg>
        <Fit w={32} className="mt-[3px] ml-[23px]">FRA</Fit>
        <div className="mt-[3px] ml-[21px] flex w-[92px] flex-col items-center leading-[28px]"><Fit w={43}>17:30</Fit><Fit w={92}>19/06/2020</Fit></div>
        <svg viewBox="0 0 24 25" className="ml-[29px] h-[25px] w-6" fill="none" stroke="#fff" strokeWidth="1.500"><path d="M1 1h22v18h-7l-4 4.500V19H1z" /></svg>
        <span className="mr-[6px] ml-[31px] h-[58px] w-px bg-[#77738a]" />
      </div>
    </div>
  );
}

export default function App() {
  return (
    <div className="flex h-[1078px] w-[1920px] flex-col overflow-hidden bg-white font-['Open_Sans','Noto_Sans',sans-serif]">
      <TabStrip />
      <Toolbar />
      <div className="flex h-[914px]">
        <div className="flex w-[1895px] flex-col">
          <AdminBar />
          <div className="flex h-[866px]"><Sidebar /><Settings /></div>
        </div>
        <Scrollbar />
      </div>
      <Taskbar />
    </div>
  );
}
